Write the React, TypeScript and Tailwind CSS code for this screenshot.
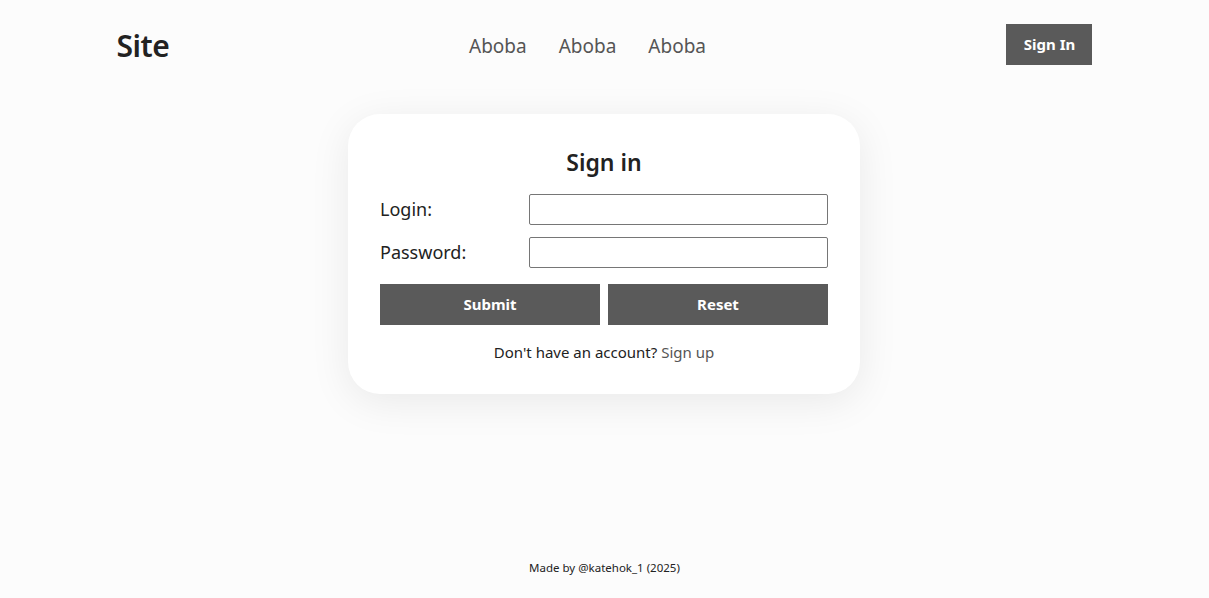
export default function App() {
  return (
    <div
      className="min-h-[598px] flex flex-col bg-[#fcfcfc] text-[#222]"
      style={{ fontFamily: '"Noto Sans", "Open Sans", sans-serif' }}
    >
      <header className="w-[976px] mx-auto flex items-center justify-between h-[89px]">
        <div className="text-[30px] font-semibold tracking-[-0.5px] leading-none w-[200px] pt-[3px]">Site</div>
        <nav className="flex gap-[32px] text-[19px] text-[#555] mr-[34px] pt-[3px]">
          <a>Aboba</a>
          <a>Aboba</a>
          <a>Aboba</a>
        </nav>
        <div className="w-[200px] flex justify-end">
          <button className="bg-[#5a5a5a] text-white font-bold text-[15px] w-[86px] h-[41px]">
            Sign In
          </button>
        </div>
      </header>

      <main className="flex-1 flex justify-center pt-[25px] pr-[1px]">
        <div className="w-[512px] h-[280px] bg-white rounded-[32px] shadow-[0_8px_40px_rgba(0,0,0,0.08)] px-8 pt-[32px]">
          <h1 className="text-center text-[23px] font-semibold leading-8 mb-[16px]">Sign in</h1>
          <div className="grid grid-cols-[149px_1fr] gap-y-3 items-center">
            <label className="text-[18px]">Login:</label>
            <input className="h-[31px] border border-[#767676] rounded-[2px]" />
            <label className="text-[18px]">Password:</label>
            <input type="password" className="h-[31px] border border-[#767676] rounded-[2px]" />
          </div>
          <div className="grid grid-cols-2 gap-2 mt-4">
            <button className="h-[41px] bg-[#5a5a5a] text-white font-bold text-[15px]">Submit</button>
            <button className="h-[41px] bg-[#5a5a5a] text-white font-bold text-[15px]">Reset</button>
          </div>
          <p className="text-center text-[15px] mt-[16px]">
            Don't have an account? <a className="text-[#555]">Sign up</a>
          </p>
        </div>
      </main>

      <footer className="text-center text-[11.5px] pb-[22px]">Made by @katehok_1 (2025)</footer>
    </div>
  );
}
